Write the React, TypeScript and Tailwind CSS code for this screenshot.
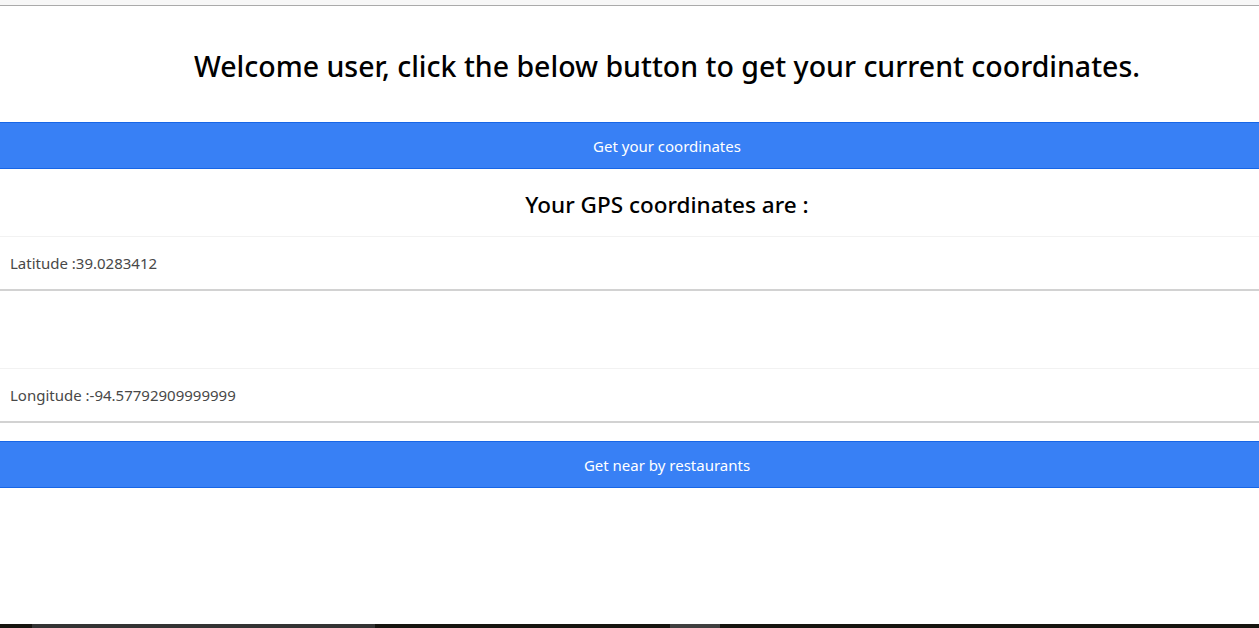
function CoordRow({ label, value }: { label: string; value: string }) {
  return (
    <div className="h-[55px] border-t border-[#f2f2f2] border-b-2 border-b-[#d2d2d2] flex items-center px-[10px] text-[15px] text-[#484848]">
      {label} :{value}
    </div>
  );
}

function BlueButton({ children }: { children: string }) {
  return (
    <button className="w-full h-[47px] pt-[2px] bg-[#3880f5] border-y border-[#1866e6] text-white text-[15px] flex items-center justify-center">
      {children}
    </button>
  );
}

export default function App() {
  return (
    <div
      className="w-full min-h-[628px] h-[628px] overflow-hidden flex flex-col bg-white"
      style={{ fontFamily: '"Noto Sans", "Open Sans", sans-serif' }}
    >
      <div className="h-[6px] bg-[#f7f7f7] border-b border-[#aaa] shrink-0" />
      <div className="w-[1334px] shrink-0">
        <div className="h-[116px] flex items-center justify-center pt-1">
          <h1 className="text-[28.5px] font-medium text-black">
            Welcome user, click the below button to get your current coordinates.
          </h1>
        </div>
        <BlueButton>Get your coordinates</BlueButton>
        <div className="h-[67px] flex items-center justify-center pt-1">
          <h2 className="text-[22.5px] font-medium text-black">Your GPS coordinates are :</h2>
        </div>
        <CoordRow label="Latitude" value="39.0283412" />
        <div className="h-[77px]" />
        <CoordRow label="Longitude" value="-94.57792909999999" />
        <div className="h-[18px]" />
        <BlueButton>Get near by restaurants</BlueButton>
      </div>
      <div className="mt-auto h-[4px] shrink-0 flex bg-[#16140f]">
        <div className="w-[32px]" />
        <div className="w-[343px] bg-[#333]" />
        <div className="w-[295px]" />
        <div className="w-[50px] bg-[#3f3f3f]" />
      </div>
    </div>
  );
}
